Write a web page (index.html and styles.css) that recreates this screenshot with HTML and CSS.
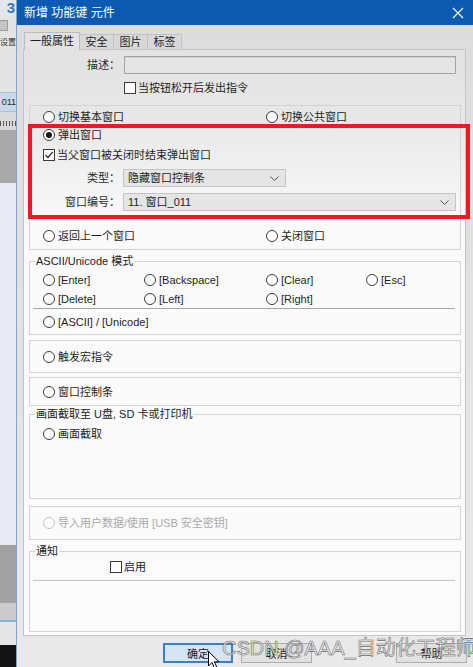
FILE: index.html
```html
<!DOCTYPE html>
<html lang="zh-CN">
<head>
    <meta charset="UTF-8">
    <meta name="viewport" content="width=device-width, initial-scale=1.0">
    <title>新增 功能键 元件</title>
    <link rel="stylesheet" href="styles.css">
</head>
<body>
    <!-- editor window peeking out behind the dialog -->
    <div class="app-strip">
        <div class="strip-logo"><span>3</span></div>
        <div class="strip-btn"><span></span></div>
        <div class="strip-label"><span>设置</span></div>
        <div class="strip-gap"></div>
        <div class="strip-tab"><span>011</span></div>
        <div class="strip-ruler"><span></span></div>
        <div class="strip-gray"></div>
        <div class="strip-canvas"></div>
        <div class="strip-dark"></div>
        <div class="strip-light"></div>
        <div class="strip-bar"></div>
        <div class="strip-black"></div>
    </div>

    <div class="dialog">
        <div class="titlebar">
            <span>新增 功能键 元件</span>
            <svg class="close" width="12" height="12" viewBox="0 0 12 12">
                <path d="M1 1 L11 11 M11 1 L1 11" stroke="#fff" stroke-width="1.1" fill="none"/>
            </svg>
        </div>

        <div class="dialog-body">
            <div class="tabs">
                <div class="tab active">一般属性</div>
                <div class="tab">安全</div>
                <div class="tab">图片</div>
                <div class="tab">标签</div>
            </div>

            <div class="panel">
                <div class="field desc-field">
                    <span class="field-label">描述：</span>
                    <div class="input"></div>
                </div>
                <div class="check release-check"><span class="box"></span>当按钮松开后发出指令</div>

                <div class="group window-group">
                    <div class="radio-row">
                        <div class="radio"><span class="dot"></span>切换基本窗口</div>
                        <div class="radio"><span class="dot"></span>切换公共窗口</div>
                    </div>

                    <div class="highlight">
                        <div class="radio"><span class="dot on"></span>弹出窗口</div>
                        <div class="check">
                            <span class="box">
                                <svg width="10" height="10" viewBox="0 0 10 10"><path d="M1.5 5 L4 7.5 L8.8 1.8" stroke="#222" stroke-width="1.2" fill="none"/></svg>
                            </span>当父窗口被关闭时结束弹出窗口
                        </div>
                        <div class="field">
                            <span class="field-label">类型：</span>
                            <div class="select type-select">隐藏窗口控制条
                                <svg width="9" height="5" viewBox="0 0 9 5"><path d="M0.5 0.5 L4.5 4.5 L8.5 0.5" stroke="#555" fill="none"/></svg>
                            </div>
                        </div>
                        <div class="field">
                            <span class="field-label">窗口编号：</span>
                            <div class="select number-select">11. 窗口_011
                                <svg width="9" height="5" viewBox="0 0 9 5"><path d="M0.5 0.5 L4.5 4.5 L8.5 0.5" stroke="#555" fill="none"/></svg>
                            </div>
                        </div>
                    </div>

                    <div class="radio-row back-row">
                        <div class="radio"><span class="dot"></span>返回上一个窗口</div>
                        <div class="radio"><span class="dot"></span>关闭窗口</div>
                    </div>
                </div>

                <fieldset class="group ascii-group">
                    <legend>ASCII/Unicode 模式</legend>
                    <div class="key-grid">
                        <div class="radio"><span class="dot"></span>[Enter]</div>
                        <div class="radio"><span class="dot"></span>[Backspace]</div>
                        <div class="radio"><span class="dot"></span>[Clear]</div>
                        <div class="radio"><span class="dot"></span>[Esc]</div>
                        <div class="radio"><span class="dot"></span>[Delete]</div>
                        <div class="radio"><span class="dot"></span>[Left]</div>
                        <div class="radio"><span class="dot"></span>[Right]</div>
                    </div>
                    <div class="separator dark"></div>
                    <div class="radio"><span class="dot"></span>[ASCII] / [Unicode]</div>
                </fieldset>

                <div class="group simple macro-box">
                    <div class="radio"><span class="dot"></span>触发宏指令</div>
                </div>

                <div class="group simple bar-box">
                    <div class="radio"><span class="dot"></span>窗口控制条</div>
                </div>

                <fieldset class="group capture-group">
                    <legend>画面截取至 U盘, SD 卡或打印机</legend>
                    <div class="radio"><span class="dot"></span>画面截取</div>
                </fieldset>

                <div class="group simple usb-box">
                    <div class="radio disabled"><span class="dot"></span>导入用户数据/使用 [USB 安全密钥]</div>
                </div>

                <fieldset class="group notify-group">
                    <legend>通知</legend>
                    <div class="check enable-check"><span class="box"></span>启用</div>
                    <div class="separator"></div>
                </fieldset>
            </div>

            <div class="buttons">
                <button class="btn primary">确定</button>
                <button class="btn">取消</button>
                <button class="btn help">帮助</button>
            </div>
        </div>
    </div>

    <div class="watermark">CSDN @AAA_自动化工程师</div>

    <svg class="pointer" width="13" height="18" viewBox="0 0 13 18">
        <path d="M0.5 0.5 L0.5 15 L4 11.5 L6.8 17.5 L9 16.5 L6.3 10.8 L11 10.8 Z" fill="#fff" stroke="#000" stroke-width="1"/>
    </svg>
</body>
</html>
```

FILE: styles.css
```css
* {
    box-sizing: border-box;
}
body {
    margin: 0;
    width: 473px;
    height: 667px;
    overflow: hidden;
    position: relative;
    display: flex;
    font-family: "Liberation Sans", "Noto Sans CJK SC", sans-serif;
    font-size: 11px;
    line-height: 14px;
    color: #1e1e1e;
    background: #e4e4e4;
}

/* background app strip */
.app-strip {
    width: 16px;
    flex: none;
    display: flex;
    flex-direction: column;
    overflow: hidden;
    background: #e4e4e4;
}
.app-strip > div {
    flex: none;
    display: flex;
    justify-content: flex-end;
    white-space: nowrap;
}
.strip-logo {
    height: 15px;
    padding-right: 1px;
    background: #e3e7ec;
    color: #3a77c2;
    font-weight: bold;
    font-size: 15px;
    line-height: 15px;
}
.strip-btn {
    height: 19px;
    align-items: flex-start;
}
.strip-btn span {
    width: 8px;
    height: 11px;
    margin-top: 5px;
    margin-right: 8px;
    background: #c4c4c4;
    border: 1px solid #9c9c9c;
    border-left: none;
}
.strip-label {
    height: 18px;
    align-items: center;
    font-size: 8px;
    color: #333;
}
.strip-gap {
    height: 40px;
}
.strip-tab {
    height: 20px;
    align-items: center;
    background: #c8d8ea;
    border-top: 1px solid #a7bfd9;
    border-bottom: 1px solid #a7bfd9;
    color: #2a2a2a;
    font-size: 9px;
}
.strip-ruler {
    height: 18px;
    align-items: flex-end;
    background: #dadada;
    padding-bottom: 4px;
}
.strip-ruler span {
    width: 16px;
    height: 5px;
    background: repeating-linear-gradient(to right, #555 0 1px, transparent 1px 3px);
}
.strip-gray {
    height: 53px;
    background: #a9a9a9;
}
.strip-canvas {
    height: 362px;
    background: #e9e9f6;
}
.strip-dark {
    height: 58px;
    background: #a1a1a1;
}
.strip-light {
    height: 17px;
    background: #cbcbcb;
}
.strip-bar {
    height: 25px;
    background: #e6e6e6;
    border-top: 2px solid #84b1dc;
}
.strip-black {
    height: 22px;
    background: #141414;
}

/* dialog */
.dialog {
    flex: 1;
    display: flex;
    flex-direction: column;
    border-left: 1px solid #7ea3cc;
    background: linear-gradient(#dcdcdc, #e9e9e9);
}
.titlebar {
    height: 25px;
    flex: none;
    display: flex;
    align-items: center;
    justify-content: space-between;
    padding: 0 9px 0 7px;
    background: #0c5bb0;
    color: #fff;
    font-size: 12px;
}
.dialog-body {
    padding: 7px 7px 0 6px;
}
.tabs {
    display: flex;
    align-items: flex-end;
    height: 17px;
    padding-left: 1px;
}
.tab {
    height: 15px;
    width: 35px;
    margin-left: -1px;
    text-align: center;
    line-height: 14px;
    background: #d8d8d8;
    border: 1px solid #c2c2c2;
    border-bottom: none;
}
.tab.active {
    width: 56px;
    height: 18px;
    margin-left: 0;
    margin-bottom: -1px;
    padding-top: 1px;
    position: relative;
    z-index: 1;
    background: #e3e3e3;
    border-color: #bcbcbc;
}
.panel {
    border: 1px solid #c4c4c4;
    padding: 6px 0 3px 0;
    background: linear-gradient(#e2e2e2 0, #e8e8e8 70px, #fafafa 175px, #fbfbfb 100%);
}

/* form pieces */
.field {
    display: flex;
    align-items: center;
    height: 18px;
    gap: 3px;
}
.field-label {
    flex: none;
    text-align: right;
    color: #2a2a2a;
}
.desc-field .field-label {
    width: 96px;
}
.desc-field {
    gap: 4px;
}
.input {
    width: 332px;
    height: 18px;
    background: #e5e5e5;
    border: 1px solid #a3a3a3;
    box-shadow: inset 0 1px 0 #d0d0d0;
}
.select {
    height: 18px;
    display: flex;
    align-items: center;
    justify-content: space-between;
    padding: 0 6px 0 4px;
    background: #e5e5e5;
    border: 1px solid #c4c4c4;
    color: #222;
}
.type-select {
    width: 163px;
}
.number-select {
    width: 333px;
}
.radio, .check {
    display: flex;
    align-items: center;
    gap: 3px;
    height: 14px;
    white-space: nowrap;
}
.check {
    gap: 2px;
}
.dot {
    flex: none;
    width: 12px;
    height: 12px;
    border: 1px solid #3b3b3b;
    border-radius: 50%;
    background: #fff;
    display: flex;
    align-items: center;
    justify-content: center;
}
.dot.on::after {
    content: "";
    width: 6px;
    height: 6px;
    border-radius: 50%;
    background: #1a1a1a;
}
.box {
    flex: none;
    width: 12px;
    height: 12px;
    border: 1px solid #3b3b3b;
    background: #fff;
    display: flex;
    align-items: center;
    justify-content: center;
}
.radio.disabled {
    color: #a9a9a9;
}
.radio.disabled .dot {
    border-color: #c2c2c2;
}
.release-check {
    margin-top: 7px;
    padding-left: 100px;
}

/* group boxes */
.group {
    margin: 0 4px 0 5px;
    border: 1px solid #d3d3d3;
    min-width: 0;
}
.window-group {
    margin-top: 10px;
    padding: 4px 0 6px 0;
}
.radio-row {
    display: grid;
    grid-template-columns: 223px 1fr;
    padding-left: 13px;
}
.back-row {
    margin-top: 10px;
}
.highlight {
    margin: 0 -10px 0 -2px;
    border: 4px solid #ea1b23;
    padding: 0 0 4px 11px;
    display: flex;
    flex-direction: column;
}
.highlight .check {
    margin-top: 6px;
}
.highlight .field {
    margin-left: -11px;
}
.highlight .field .field-label {
    width: 88px;
}
.highlight .field:nth-of-type(3) {
    margin-top: 7px;
}
.highlight .field:nth-of-type(4) {
    margin-top: 6px;
}
fieldset.group {
    padding: 5px 5px 5px 13px;
}
legend {
    margin-left: -8px;
    padding: 0 1px;
    line-height: 14px;
    color: #222;
}
.ascii-group {
    margin-top: 4px;
}
.key-grid {
    display: grid;
    grid-template-columns: 101px 122px 100px 1fr;
    row-gap: 5px;
}
.separator {
    height: 1px;
    margin: 2px 0 6px -10px;
    background: #bdbdbd;
}
.separator.dark {
    background: #a6a6a6;
}
.simple {
    padding-left: 13px;
}
.macro-box {
    margin-top: 5px;
    padding-top: 9px;
    padding-bottom: 8px;
}
.bar-box {
    margin-top: 4px;
    padding-top: 7px;
    padding-bottom: 6px;
}
fieldset.capture-group {
    margin-top: 1px;
    padding-top: 6px;
    padding-bottom: 57px;
}
.usb-box {
    margin-top: 7px;
    padding-top: 9px;
    padding-bottom: 9px;
}
fieldset.notify-group {
    margin-top: 4px;
    padding-top: 2px;
    padding-bottom: 0;
}
.enable-check {
    padding-left: 67px;
}
.notify-group .separator {
    margin: 6px 0 50px -10px;
    background: #c4c4c4;
}

/* bottom buttons */
.buttons {
    display: flex;
    margin: 7px -1px 0 0;
    padding-left: 140px;
    gap: 8px;
}
.btn {
    width: 71px;
    height: 20px;
    padding: 0;
    font-family: inherit;
    font-size: 11px;
    color: #222;
    background: #e1e1e1;
    border: 1px solid #adadad;
}
.btn.primary {
    width: 70px;
    background: #d3e5f6;
    border: 2px solid #3f80c2;
}
.btn.help {
    margin-left: auto;
}

/* overlays */
.watermark {
    position: absolute;
    left: 222px;
    top: 636px;
    font-family: "Liberation Sans", "Noto Sans CJK SC", sans-serif;
    font-size: 20px;
    line-height: 24px;
    color: rgba(240, 240, 240, 0.85);
    -webkit-text-stroke: 0.6px #6e6e6e;
    white-space: nowrap;
}
.pointer {
    position: absolute;
    left: 208px;
    top: 651px;
}
```
